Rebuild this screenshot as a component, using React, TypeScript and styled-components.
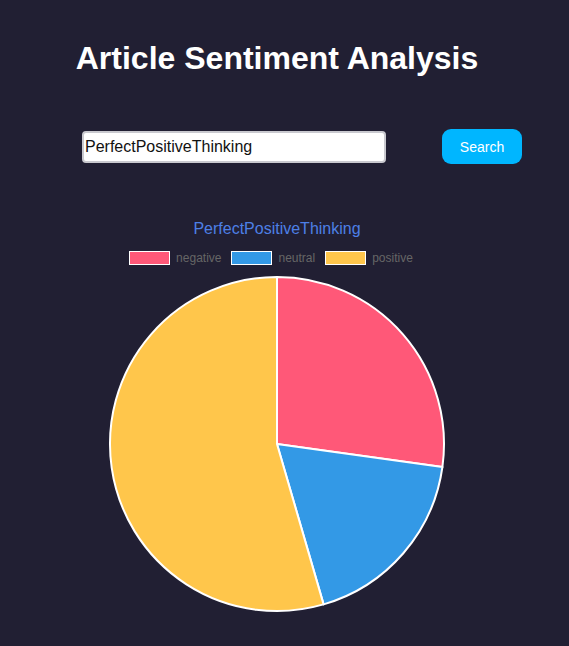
import React from 'react'
import styled, { createGlobalStyle } from 'styled-components';

const GlobalStyle = createGlobalStyle`
    html, body {
        margin: 0;
        padding: 0;
        background: #211f33;
    }
    body {
        font-family: "Liberation Sans", Arial, sans-serif;
    }
`;

const Page = styled.div`
    width: 538px;
    padding: 0 8px;
    min-height: 646px;
    background: #211f33;
`;

const Title = styled.h1`
    margin: 0;
    padding-top: 38px;
    text-align: center;
    color: #ffffff;
    font-size: 32px;
    font-weight: bold;
    line-height: 40px;
`;

const SearchRow = styled.div`
    display: flex;
    align-items: center;
    margin-top: 51px;
    padding-left: 74px;
    gap: 56px;
`;

const Input = styled.input`
    box-sizing: border-box;
    width: 304px;
    height: 32px;
    padding: 0 1px;
    border: 2px solid #c9c9cf;
    border-radius: 4px;
    background: #ffffff;
    color: #111111;
    font-family: "Liberation Sans", Arial, sans-serif;
    font-size: 16px;
    outline: none;
`;

const Button = styled.button`
    width: 80px;
    height: 35px;
    border: 0;
    border-radius: 9px;
    background: #00b6ff;
    color: #ffffff;
    font-family: "Liberation Sans", Arial, sans-serif;
    font-size: 14px;
    cursor: pointer;
`;

const Chart = styled.div`
    display: flex;
    flex-direction: column;
    align-items: center;
    margin-top: 55px;
`;

const ChartTitle = styled.div`
    color: #4d7fe6;
    font-size: 16px;
    line-height: 20px;
`;

const Legend = styled.div`
    display: flex;
    gap: 10px;
    margin-top: 12px;
    margin-right: 12px;
    height: 14px;
    align-items: center;
`;

const LegendItem = styled.div`
    display: flex;
    align-items: center;
    gap: 6px;
    color: #666666;
    font-size: 12px;
`;

const Swatch = styled.span<{ $color: string }>`
    box-sizing: border-box;
    width: 41px;
    height: 14px;
    border: 1px solid #ffffff;
    background: ${p => p.$color};
`;

const PieWrap = styled.svg`
    margin-top: 10px;
    display: block;
`;

const data = [
    { label: 'negative', value: 27.2, color: '#ff5878' },
    { label: 'neutral', value: 18.3, color: '#3399e6' },
    { label: 'positive', value: 54.5, color: '#ffc64b' },
];

const Pie = () => {
    const size = 338;
    const c = size / 2;
    const r = 167;
    const total = data.reduce((s, d) => s + d.value, 0);
    let start = -Math.PI / 2;

    return (
        <PieWrap width={size} height={size} viewBox={`0 0 ${size} ${size}`}>
            {data.map(d => {
                const angle = (d.value / total) * Math.PI * 2;
                const end = start + angle;
                const x1 = c + r * Math.cos(start);
                const y1 = c + r * Math.sin(start);
                const x2 = c + r * Math.cos(end);
                const y2 = c + r * Math.sin(end);
                const large = angle > Math.PI ? 1 : 0;
                const path = `M ${c} ${c} L ${x1} ${y1} A ${r} ${r} 0 ${large} 1 ${x2} ${y2} Z`;
                start = end;
                return <path key={d.label} d={path} fill={d.color} stroke="#ffffff" strokeWidth={2} strokeLinejoin="round" />;
            })}
        </PieWrap>
    );
}

const App = () => {
    return (
        <Page>
            <GlobalStyle />
            <Title>Article Sentiment Analysis</Title>
            <SearchRow>
                <Input defaultValue="PerfectPositiveThinking" />
                <Button>Search</Button>
            </SearchRow>
            <Chart>
                <ChartTitle>PerfectPositiveThinking</ChartTitle>
                <Legend>
                    {data.map(d => (
                        <LegendItem key={d.label}>
                            <Swatch $color={d.color} />
                            {d.label}
                        </LegendItem>
                    ))}
                </Legend>
                <Pie />
            </Chart>
        </Page>
    );
}

export default App
